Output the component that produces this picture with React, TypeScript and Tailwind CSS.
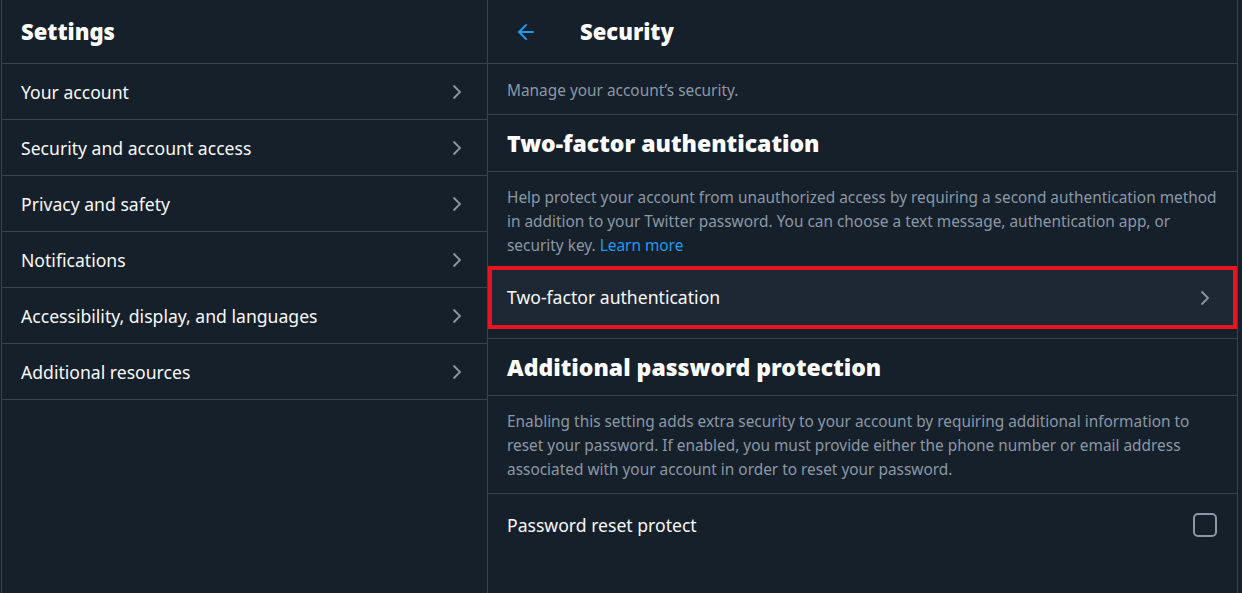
import { ArrowLeft } from "lucide-react";

const menu = [
  "Your account",
  "Security and account access",
  "Privacy and safety",
  "Notifications",
  "Accessibility, display, and languages",
  "Additional resources",
];

function Chevron() {
  return (
    <svg width="12" height="16" viewBox="0 0 12 16" className="shrink-0">
      <path d="M2.5 1.5 L9 8 L2.5 14.5" fill="none" stroke="#8b98a5" strokeWidth="1.8" />
    </svg>
  );
}

export default function App() {
  return (
    <div
      className="flex h-[593px] w-full overflow-hidden bg-[#16202b] pl-px text-[#f7f9f9]"
      style={{ fontFamily: '"Noto Sans", "Open Sans", sans-serif' }}
    >
      {/* left: settings menu */}
      <div className="flex w-[487px] shrink-0 flex-col border-x border-[#38444d]">
        <div className="flex h-16 items-center border-b border-[#38444d] pl-[19px]">
          <h1 className="text-[22px] font-black text-white">Settings</h1>
        </div>
        {menu.map((item) => (
          <div
            key={item}
            className="flex h-14 items-center justify-between border-b border-[#38444d] pl-[19px] pr-6"
          >
            <span className="pt-[2px] text-[17.6px]">{item}</span>
            <Chevron />
          </div>
        ))}
      </div>

      {/* right: security */}
      <div className="flex w-[750px] shrink-0 flex-col border-r border-[#38444d]">
        <div className="flex h-16 items-center border-b border-[#38444d] pl-[26px]">
          <ArrowLeft size={24} strokeWidth={1.8} className="text-[#1d9bf0]" />
          <h2 className="ml-[42px] text-[22px] font-black text-white">Security</h2>
        </div>

        <div className="flex h-[51px] items-center border-b border-[#38444d] px-[19px] pt-[3px] text-[15.4px] text-[#8b98a5]">
          Manage your account’s security.
        </div>

        <div className="flex h-[57px] items-center border-b border-[#38444d] px-[19px]">
          <h3 className="text-[23px] font-black text-white">Two-factor authentication</h3>
        </div>

        <p className="pb-2 pl-[19px] pr-[17px] pt-[14px] text-[15.4px] leading-6 text-[#8b98a5]">
          Help protect your account from unauthorized access by requiring a second authentication method
          in addition to your Twitter password. You can choose a text message, authentication app, or
          security key. <span className="text-[#1d9bf0]">Learn more</span>
        </p>

        <div className="border-b border-[#38444d] pb-[9px]">
          <div className="flex h-[63px] items-center justify-between border-4 border-[#e8141f] bg-[#1e2834] pl-[15px] pr-[22px]">
            <span className="text-[17.6px]">Two-factor authentication</span>
            <Chevron />
          </div>
        </div>

        <div className="flex h-[57px] items-center border-b border-[#38444d] px-[19px]">
          <h3 className="text-[23px] font-black text-white">Additional password protection</h3>
        </div>

        <p className="border-b border-[#38444d] pb-[11px] pl-[19px] pr-[17px] pt-[14px] text-[15.4px] leading-6 text-[#8b98a5]">
          Enabling this setting adds extra security to your account by requiring additional information to
          reset your password. If enabled, you must provide either the phone number or email address
          associated with your account in order to reset your password.
        </p>

        <div className="flex h-[62px] items-center justify-between pl-[19px] pr-5">
          <span className="text-[17.6px]">Password reset protect</span>
          <div className="h-6 w-6 rounded-[5px] border-2 border-[#8b98a5]" />
        </div>
      </div>
    </div>
  );
}
